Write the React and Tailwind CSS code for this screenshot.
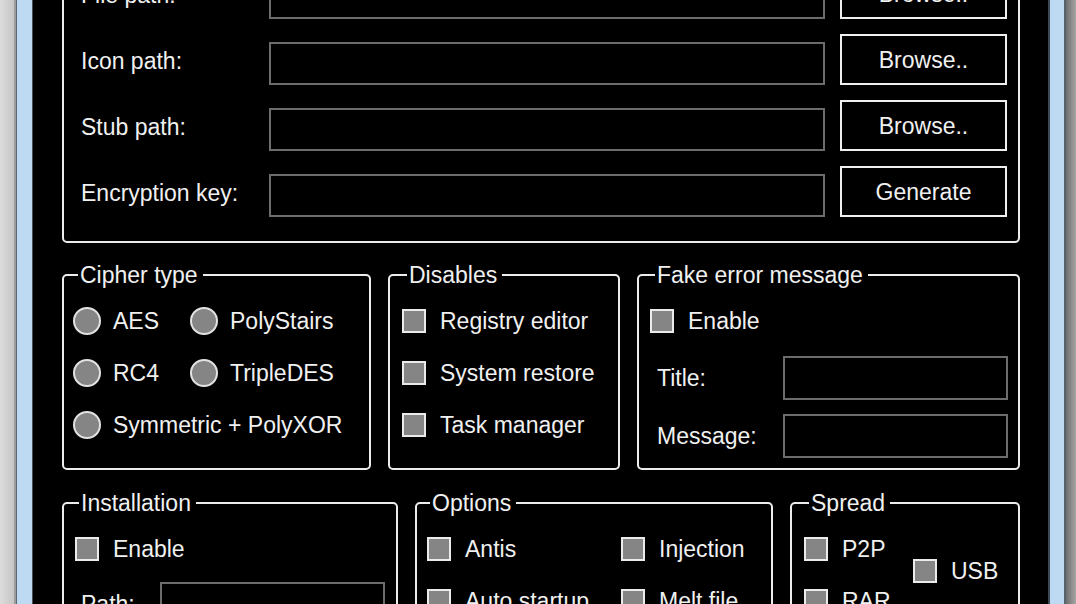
import React from "react";

// Group frame with a caption sitting on the top border (WinForms GroupBox look)
function Group({ title, inset = "ml-[14px]", children }) {
  return (
    <fieldset className="min-w-0 border-2 border-[#ececec] rounded-[5px]">
      <legend className={`${inset} pl-[2px] pr-[5px] leading-6`}>{title}</legend>
      {children}
    </fieldset>
  );
}

function CheckBox({ label, row = "h-[52px]" }) {
  return (
    <div className={`flex items-center ${row}`}>
      <span className="w-[24px] h-[24px] shrink-0 border-2 border-[#ebebeb] bg-[#858585]" />
      <span className="ml-[14px] leading-6 whitespace-nowrap">{label}</span>
    </div>
  );
}

function Radio({ label, span = "" }) {
  return (
    <div className={`flex items-center h-[52px] ${span}`}>
      <span className="w-[28px] h-[28px] shrink-0 rounded-full border-2 border-[#e2e2e2] bg-[#858585]" />
      <span className="ml-[12px] leading-6 whitespace-nowrap">{label}</span>
    </div>
  );
}

function PathRow({ label, action }) {
  return (
    <div className="flex items-center h-[51px]">
      <span className="w-[188px] shrink-0 pt-[3px] leading-6 whitespace-nowrap">{label}</span>
      <span className="w-[556px] h-[43px] self-end border-2 border-[#6c6c6c]" />
      <button className="ml-[15px] w-[167px] h-full border-2 border-[#efefef] bg-black text-[#f0f0f0] flex items-center justify-center leading-6">
        {action}
      </button>
    </div>
  );
}

export default function App() {
  return (
    <div className="w-[1076px] h-[604px] overflow-hidden flex bg-black text-[23px] text-[#f0f0f0] font-['Liberation_Sans',Arial,sans-serif]">
      {/* left window frame */}
      <div className="w-[14px] shrink-0 bg-linear-to-r from-[#dcdcdc] to-[#c6c6c6]" />
      <div className="w-[2px] shrink-0 bg-[#9c9c9c]" />
      <div className="w-[1px] shrink-0 bg-[#5d6872]" />
      <div className="w-[15px] shrink-0 bg-[#bddaf2]" />
      <div className="w-[1px] shrink-0 bg-[#45505a]" />

      {/* form body */}
      <div className="flex-1 min-w-0 pl-[29px] pr-[28px]">
        <div className="-mt-[54px] border-2 border-[#ececec] rounded-[5px] pt-[20px] pb-[24px] pl-[17px] pr-[11px] flex flex-col gap-[15px]">
          <PathRow label="File path:" action="Browse.." />
          <PathRow label="Icon path:" action="Browse.." />
          <PathRow label="Stub path:" action="Browse.." />
          <PathRow label="Encryption key:" action="Generate" />
        </div>

        <div className="mt-[20px] grid grid-cols-[309px_232px_383px] gap-[17px]">
          <Group title="Cipher type">
            <div className="pt-[8px] pb-[17px] pl-[9px] grid grid-cols-[117px_1fr]">
              <Radio label="AES" />
              <Radio label="PolyStairs" />
              <Radio label="RC4" />
              <Radio label="TripleDES" />
              <Radio label="Symmetric + PolyXOR" span="col-span-2" />
            </div>
          </Group>

          <Group title="Disables" inset="ml-[17px]">
            <div className="pt-[8px] pl-[12px]">
              <CheckBox label="Registry editor" />
              <CheckBox label="System restore" />
              <CheckBox label="Task manager" />
            </div>
          </Group>

          <Group title="Fake error message" inset="ml-[16px]">
            <div className="pt-[8px] pb-[10px] pl-[11px] pr-[10px]">
              <CheckBox label="Enable" />
              <div className="mt-[9px] flex items-center h-[44px]">
                <span className="ml-[7px] w-[126px] shrink-0 leading-6">Title:</span>
                <span className="flex-1 h-full border-2 border-[#6c6c6c]" />
              </div>
              <div className="mt-[14px] flex items-center h-[44px]">
                <span className="ml-[7px] w-[126px] shrink-0 leading-6">Message:</span>
                <span className="flex-1 h-full border-2 border-[#6c6c6c]" />
              </div>
            </div>
          </Group>
        </div>

        <div className="mt-[21px] grid grid-cols-[336px_358px_230px] gap-[17px]">
          <Group title="Installation" inset="ml-[15px]">
            <div className="pt-[8px] pl-[11px] pb-[12px]">
              <CheckBox label="Enable" />
              <div className="mt-[7px] flex items-center h-[44px]">
                <span className="ml-[6px] w-[79px] shrink-0 leading-6">Path:</span>
                <span className="w-[225px] h-full border-2 border-[#6c6c6c]" />
              </div>
            </div>
          </Group>

          <Group title="Options" inset="ml-[13px]">
            <div className="pt-[8px] pl-[10px] grid grid-cols-[194px_1fr]">
              <CheckBox label="Antis" />
              <CheckBox label="Injection" />
              <CheckBox label="Auto startup" />
              <CheckBox label="Melt file" />
            </div>
          </Group>

          <Group title="Spread" inset="ml-[17px]">
            <div className="pt-[8px] pl-[12px] flex">
              <div className="w-[109px] shrink-0">
                <CheckBox label="P2P" />
                <CheckBox label="RAR" />
              </div>
              <div className="pt-[36px]">
                <CheckBox label="USB" row="h-[24px]" />
              </div>
            </div>
          </Group>
        </div>
      </div>

      {/* right window frame */}
      <div className="w-[2px] shrink-0 bg-[#3e4852]" />
      <div className="w-[14px] shrink-0 bg-[#bddaf2]" />
      <div className="w-[2px] shrink-0 bg-[#57616b]" />
      <div className="w-[10px] shrink-0 bg-linear-to-r from-[#6e6e6e] to-[#a6a6a6]" />
    </div>
  );
}
